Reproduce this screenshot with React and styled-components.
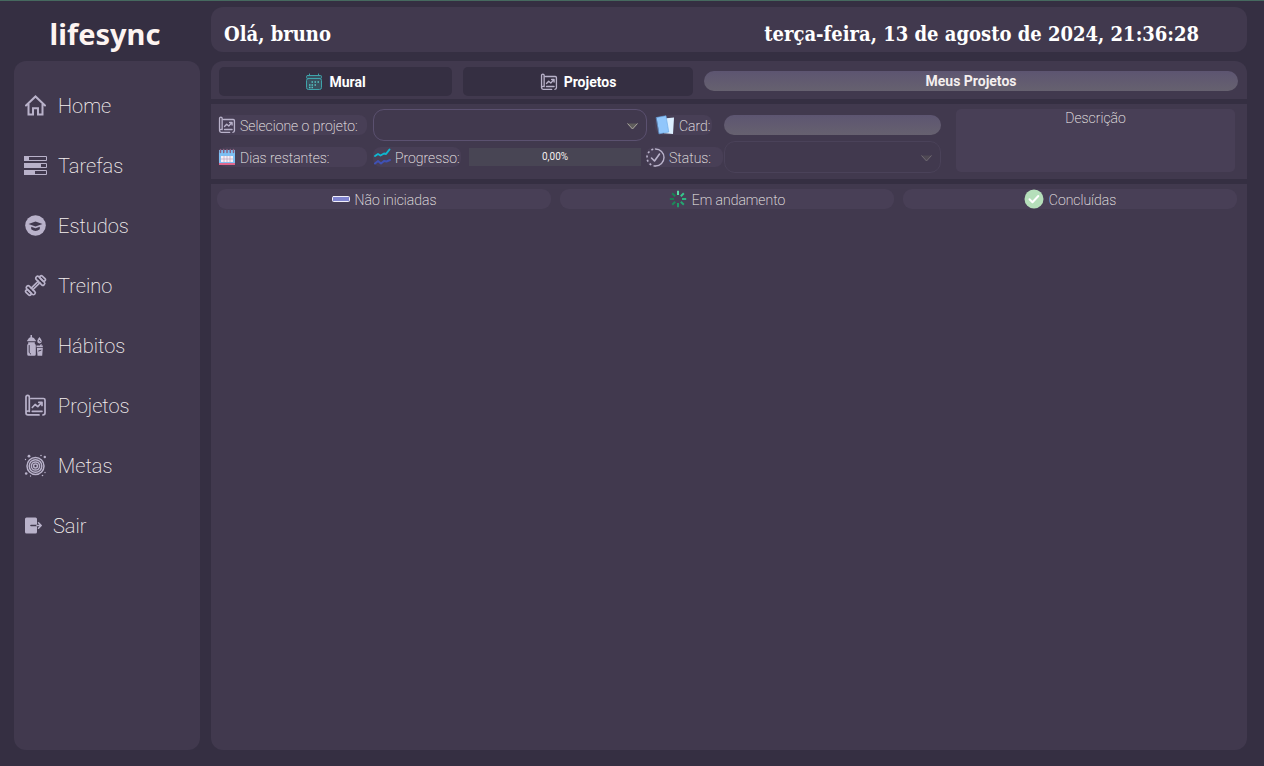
import React from 'react';
import styled, { createGlobalStyle } from 'styled-components';

const color = {
  page: '#352f42',
  panel: '#41394e',
  field: '#483f56',
  line: '#5b5170',
  lineOff: '#4a4259',
  icon: '#b9b2ca',
  text: '#f4efee',
  title: '#ffffff',
};

const GlobalStyle = createGlobalStyle`
  *, *::before, *::after { box-sizing: border-box; }
  body {
    margin: 0;
    background: ${color.page};
    color: ${color.text};
    font-family: Roboto, "Liberation Sans", sans-serif;
    font-weight: 200;
  }
  button, input, select { font: inherit; color: inherit; }
`;

const Page = styled.div`
  min-height: 100vh;
  display: grid;
  grid-template-columns: 186px minmax(0, 1fr);
  grid-template-rows: 45px 1fr;
  gap: 9px 11px;
  padding: 6px 17px 16px 14px;
  border-top: 1px solid #46695f;
`;

const Logo = styled.div`
  padding-right: 4px;
  display: flex;
  align-items: center;
  justify-content: center;
  height: 53px;
  font: 700 29px/40px "Noto Sans", sans-serif;
  color: #fdf4f1;
`;

const Header = styled.header`
  display: flex;
  align-items: center;
  justify-content: space-between;
  padding: 8px 48px 0 13px;
  border-radius: 12px;
  background: ${color.panel};
  color: ${color.title};
  font: 700 20px/28px "DejaVu Serif Condensed", "DejaVu Serif", serif;
  white-space: nowrap;
`;

const Sidebar = styled.nav`
  padding: 15px 10px;
  border-radius: 12px;
  background: ${color.panel};
`;

const NavLink = styled.a`
  display: flex;
  align-items: center;
  gap: 11px;
  height: 60px;
  color: ${color.text};
  font-size: 20px;
  line-height: 24px;
  text-decoration: none;

  svg { margin-bottom: 2px; }
`;

const Main = styled.main`
  display: grid;
  grid-template-rows: 38px 75px 1fr;
  gap: 5px;
  border-radius: 12px;
  overflow: hidden;
`;

const Panel = styled.section`
  background: ${color.panel};
`;

const TabBar = styled(Panel)`
  display: grid;
  grid-template-columns: 233fr 230fr 534fr;
  gap: 11px;
  align-items: start;
  padding: 6px 9px 0 8px;
`;

const Tab = styled.button`
  display: flex;
  align-items: center;
  justify-content: center;
  gap: 6px;
  height: 29px;
  padding: 0;
  border: 0;
  border-radius: 5px;
  background: ${color.page};
  color: ${color.title};
  font-size: 14px;
  font-weight: 700;
`;

const pill = `
  height: 20px;
  border: 0;
  border-radius: 10px;
  background: linear-gradient(#5d5571, #66616f);
`;

const Heading = styled.h1`
  ${pill}
  margin: 4px 0 0;
  font-size: 14px;
  font-weight: 700;
  line-height: 20px;
  text-align: center;
`;

const Filters = styled(Panel)`
  display: grid;
  grid-template-columns: 723fr 279fr;
  gap: 15px;
  padding: 5px 12px 6px 7px;
`;

const Fields = styled.div`
  display: grid;
  grid-template-rows: 32px 32px;
  min-width: 0;
`;

const FieldRow = styled.div`
  display: flex;
  align-items: center;
`;

const Label = styled.label`
  flex: none;
  display: flex;
  align-items: center;
  gap: 4px;
  width: ${(p) => p.$width}px;
  height: 20px;
  padding-top: 2px;
  margin-right: ${(p) => p.$after}px;
  border-radius: 8px;
  background: ${color.field};
  font-size: 14px;
  line-height: 20px;
  white-space: nowrap;

  svg { margin-bottom: 2px; }
`;

const SelectBox = styled.div`
  position: relative;
  flex: ${(p) => (p.$wide ? '1' : '0 0 217px')};
  height: 32px;
  margin-right: ${(p) => (p.$wide ? 8 : 0)}px;

  svg {
    position: absolute;
    right: 9px;
    top: 14px;
    pointer-events: none;
    opacity: ${(p) => (p.$wide ? 1 : 0.45)};
  }
`;

const Select = styled.select`
  appearance: none;
  display: block;
  width: 100%;
  height: 32px;
  padding: 0 28px 0 10px;
  border: 1px solid ${color.line};
  border-radius: 11px;
  background: ${color.panel};

  &:disabled { border-color: ${color.lineOff}; opacity: 1; }
`;

const CardInput = styled.input`
  ${pill}
  flex: 0 0 217px;
  width: 217px;
  padding: 0 10px;
`;

const Progress = styled.div`
  flex: 1;
  height: 18px;
  margin-right: 5px;
  background: #484554;
  font-size: 10px;
  font-weight: 400;
  line-height: 18px;
  text-align: center;
`;

const Description = styled.div`
  height: 63px;
  border-radius: 5px;
  background: ${color.field};
  font-size: 14px;
  line-height: 18px;
  text-align: center;
`;

const Board = styled(Panel)`
  display: grid;
  grid-template-columns: repeat(3, minmax(0, 1fr));
  gap: 9px;
  align-items: start;
  padding: 5px 10px 5px 6px;
`;

const ColumnTitle = styled.h2`
  display: flex;
  align-items: center;
  justify-content: center;
  gap: 5px;
  height: 20px;
  padding-top: 2px;
  margin: 0;
  border-radius: 9px;
  background: ${color.field};
  font-size: 14px;
  font-weight: 200;
  line-height: 20px;

  svg { margin-bottom: 2px; }
`;

const Glyph = styled.svg`
  flex: none;
  fill: none;
  stroke: ${color.icon};
`;

const Icon = ({ w = 23, h = 23, vb, children }) => (
  <Glyph width={w} height={h} viewBox={vb || `0 0 ${w} ${h}`}
    strokeWidth="2" strokeLinejoin="round" strokeLinecap="round" aria-hidden="true">
    {children}
  </Glyph>
);

const HomeIcon = () => (
  <Icon>
    <path d="M2 11.5 11.5 2.5 21 11.5M4.5 10v10.5H9v-6.2h5v6.2h4.500V10" strokeLinejoin="miter" />
  </Icon>
);

const TasksIcon = () => (
  <Icon h={19}>
    <g strokeWidth="1">
      <path d="M.5.5h22v4H.5zM.5 7.5h22v4H.5zM.5 14.5h22v4H.5z" />
      <path d="M0 0h5v5H0zM0 7h17v5H0zM0 14h11v5H0z" fill={color.icon} stroke="none" />
    </g>
  </Icon>
);

const StudyIcon = () => (
  <Icon>
    <circle cx="11.5" cy="11.5" r="10.3" fill={color.icon} stroke="none" />
    <path d="M4.5 10 11.5 7.500l7 2.500-7 2.600zM7.200 12.700l4.300 1.600 4.300-1.600v2.600q-4.300 3.400-8.600 0z" fill={color.panel} stroke="none" />
  </Icon>
);

const GymIcon = () => (
  <Icon>
    <g transform="rotate(-45 11.5 11.5)" strokeWidth="1.7">
      <rect x="3" y="6" width="3.600" height="11" rx="1.600" />
      <rect x="0" y="8.200" width="3" height="6.600" rx="1.400" />
      <rect x="16.400" y="6" width="3.600" height="11" rx="1.600" />
      <rect x="20" y="8.200" width="3" height="6.600" rx="1.400" />
      <path d="M6.600 10.400h9.800M6.600 12.600h9.800" />
    </g>
  </Icon>
);

const HabitsIcon = () => (
  <Icon>
    <g fill={color.icon} stroke="none">
      <path d="M6.500 1h1.500v2.200q2.500.3 3 2.300l.8.700v1H3.200v-1l.8-.7q.5-2 2.500-2.300z" />
      <path d="M4.200 8.200h6.600v1.600q1 .6 1 1.800v8.600q0 1.500-1.500 1.500H4.700q-1.500 0-1.500-1.500v-8.600q0-1.200 1-1.800z" />
      <path d="M15.400 3q2.400 2.700 2.400 4.100a2.300 2.300 0 0 1-4.600 0q0-1.400 2.200-4.100zM12.500 11.500h3.500l.6-1.300h1.300l-.5 1.300h1.400v1.800h-6.300zM12.900 14h5.900l-.6 7.700h-4.700z" />
    </g>
    <path d="M5.200 11.500v7l1.500 1.500M14.600 17l2.400-.8M15.200 6.500l1 .8" stroke={color.panel} strokeWidth="1" />
  </Icon>
);

const ProjectIcon = ({ size = 23 }) => (
  <Icon w={size} h={size} vb="0 0 23 23">
    <g strokeWidth="1.700">
      <path d="M5.300 17.500V3a1.600 1.600 0 0 0-3.300 0v16q0 1.900 2 1.900h11M5.300 17H4q-2 0-2 1.800M7 4.500h12.500q1.500 0 1.500 1.500v13q0 1.900-2 1.900" />
      <path d="M8.300 17.300h9.700M8.300 13.500l2.800-3 2.700 2.200 4-4.200M14.800 8.300h3.200v3.200" />
    </g>
  </Icon>
);

const GoalsIcon = () => (
  <Icon>
    <g strokeWidth="1.500">
      <circle cx="11.500" cy="12" r="8.500" />
      <circle cx="11.500" cy="12" r="6.300" />
      <circle cx="11.500" cy="12" r="4.100" />
      <circle cx="11.500" cy="12" r="1.900" />
    </g>
    <g fill={color.icon} stroke="none">
      <circle cx="5" cy="2.200" r="1.400" /><circle cx="20.800" cy="3" r="1.200" />
      <circle cx="2.200" cy="19.500" r="1.300" /><circle cx="17" cy="1.500" r=".8" />
      <circle cx="1.500" cy="5.500" r=".7" /><circle cx="21" cy="18.500" r=".7" />
      <circle cx="6.500" cy="22" r=".7" /><circle cx="18.500" cy="21.500" r=".8" />
    </g>
  </Icon>
);

const ExitIcon = () => (
  <Icon w={18} h={17}>
    <rect x="1" y=".5" width="12" height="16" rx="1.500" fill={color.icon} stroke="none" />
    <path d="M7 8.500h6" stroke={color.panel} strokeWidth="1.600" />
    <path d="M13 8.500h4M14.500 5.800l2.700 2.700-2.700 2.700" strokeWidth="1.500" />
  </Icon>
);

const MuralIcon = () => (
  <Icon w={18} h={18}>
    <g stroke="#3fa3ab" strokeWidth="1">
      <rect x="1.500" y="5.500" width="15" height="11" rx="2" fill="#39505f" />
      <rect x="1.500" y="2.500" width="15" height="3" rx="1" fill="#39505f" />
      <path d="M4.500 1v1.500M13.500 1v1.500" />
      <path d="M6.500 9h1.500M9.500 9H11M12.500 9H14M4 12h1.500M6.500 12h1.500M9.500 12H11M4 14.500h1.500M6.500 14.500h1.500" stroke="#55c3c4" strokeWidth="1.500" strokeLinecap="butt" />
    </g>
  </Icon>
);

const DaysIcon = () => (
  <Icon w={18} h={18}>
    <g stroke="none">
      <path d="M1 2h16v14H1z" fill="#7cc0f4" />
      <path d="M1 15h16v2H1z" fill="#e0668c" />
      <path d="M3 8h12v6H3z" fill="#f8f0f7" />
    </g>
    <path d="M3 11h12M6 8v6M9 8v6M12 8v6" stroke="#b9a5bd" strokeWidth=".7" />
    <path d="M2.500 1.500v3M5.700 1.500v3M9 1.500v3M12.300 1.500v3M15.500 1.500v3" stroke="#8a5f7f" strokeWidth="1.500" />
  </Icon>
);

const ProgressIcon = () => (
  <Icon w={18} h={18}>
    <path d="M2 8 5 6l2.500 1.500L11 5.500l2 .5 3.500-4.500" stroke="#0fb6cf" />
    <path d="M2 15.500 5 13l3 2.500 3-2.500 2.500.5L17 12" stroke="#3f51b5" />
  </Icon>
);

const CardIcon = () => (
  <Icon w={20} h={20}>
    <path d="m9 3.500 10-1L18 19l-9-.8z" fill="#dcefff" stroke="none" />
    <path d="M1.500 2.500 11 .8l2.800 16.200-9.500 1.800z" fill="#90c6fb" stroke="#6aa7e4" strokeWidth=".6" />
  </Icon>
);

const StatusIcon = () => (
  <Icon w={19} h={19}>
    <path d="M9.500 1a8.500 8.500 0 0 1 0 17" strokeWidth="1.400" />
    <path d="M9.500 18a8.500 8.500 0 0 1 0-17" strokeWidth="1.600" strokeDasharray="2 2.450" strokeLinecap="butt" />
    <path d="m5.500 10 3 3 5-7" strokeWidth="1.600" />
  </Icon>
);

const NotStartedIcon = () => (
  <Icon w={18} h={6}>
    <rect x=".5" y=".5" width="17" height="5" rx="1" fill="#7f83cf" stroke="#f1effb" strokeWidth="1" />
  </Icon>
);

const spokes = ['#59dfa5', '#35c98c', '#2eb57f', '#25a873', '#1f9c67', '#1c8a5a', '#1b7d51', '#198553'];

const RunningIcon = () => (
  <Icon w={18} h={18}>
    {spokes.map((c, i) => (
      <path key={c} d="M9 .8v4.200" stroke={c} strokeLinecap="butt" transform={`rotate(${i * 45} 9 9)`} />
    ))}
  </Icon>
);

const DoneIcon = () => (
  <Icon w={20} h={20}>
    <circle cx="10" cy="10" r="9.500" fill="#b5dfba" stroke="none" />
    <path d="m5.500 10.300 3 3L14.300 7" stroke="#fff" />
  </Icon>
);

const Arrow = () => (
  <svg width="11" height="7" viewBox="0 0 11 7" aria-hidden="true">
    <path d="M.5.500h10L5.500 6z" fill="#5e5c5b" />
    <path d="M.5.500 5.500 6l5-5.500" fill="none" stroke="#aaa69f" />
  </svg>
);

const links = [
  ['Home', HomeIcon], ['Tarefas', TasksIcon], ['Estudos', StudyIcon], ['Treino', GymIcon],
  ['Hábitos', HabitsIcon], ['Projetos', ProjectIcon], ['Metas', GoalsIcon], ['Sair', ExitIcon],
];

export default function App() {
  return (
    <>
      <GlobalStyle />
      <Page>
        <Logo>lifesync</Logo>
        <Header>
          <span>Olá, bruno</span>
          <time dateTime="2024-08-13T21:36:28">terça-feira, 13 de agosto de 2024, 21:36:28</time>
        </Header>
        <Sidebar>
          {links.map(([name, LinkIcon]) => (
            <NavLink key={name} href={`#${name.toLowerCase()}`}><LinkIcon />{name}</NavLink>
          ))}
        </Sidebar>
        <Main>
          <TabBar>
            <Tab type="button"><MuralIcon />Mural</Tab>
            <Tab type="button"><ProjectIcon size={18} />Projetos</Tab>
            <Heading>Meus Projetos</Heading>
          </TabBar>
          <Filters>
            <Fields>
              <FieldRow>
                <Label htmlFor="project" $width={149} $after={6}><ProjectIcon size={18} />Selecione o projeto:</Label>
                <SelectBox $wide><Select id="project" /><Arrow /></SelectBox>
                <Label htmlFor="card" $width={57} $after={12}><CardIcon />Card:</Label>
                <CardInput id="card" />
              </FieldRow>
              <FieldRow>
                <Label as="div" $width={149} $after={6}><DaysIcon />Dias restantes:</Label>
                <Label as="div" id="progress-label" $width={88} $after={8}><ProgressIcon />Progresso:</Label>
                <Progress role="progressbar" aria-labelledby="progress-label" aria-valuenow={0}>0,00%</Progress>
                <Label htmlFor="status" $width={77} $after={1}><StatusIcon />Status:</Label>
                <SelectBox><Select id="status" disabled /><Arrow /></SelectBox>
              </FieldRow>
            </Fields>
            <Description>Descrição</Description>
          </Filters>
          <Board>
            <ColumnTitle><NotStartedIcon />Não iniciadas</ColumnTitle>
            <ColumnTitle><RunningIcon />Em andamento</ColumnTitle>
            <ColumnTitle><DoneIcon />Concluídas</ColumnTitle>
          </Board>
        </Main>
      </Page>
    </>
  );
}
